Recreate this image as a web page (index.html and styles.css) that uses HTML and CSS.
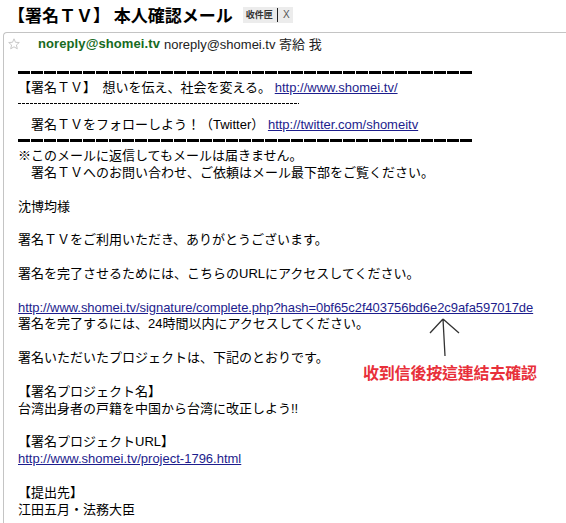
FILE: index.html
```html
<!DOCTYPE html>
<html>
<head>
<meta charset="utf-8">
<link rel="stylesheet" href="styles.css">
</head>
<body>
<div class="page">
  <div class="title-row">
    <h1 class="title">【署名ＴＶ】 本人確認メール</h1>
    <span class="tag"><span class="tag-label">收件匣</span><span class="tag-sep"></span><span class="tag-x">X</span></span>
  </div>
  <div class="panel">
    <div class="sender-row">
      <svg class="star" width="12" height="12" viewBox="0 0 12 12"><path d="M6 0.8 L7.5 4.3 L11.3 4.5 L8.4 7 L9.3 10.8 L6 8.8 L2.7 10.8 L3.6 7 L0.7 4.5 L4.5 4.3 Z" fill="#fff" stroke="#c8c8c8" stroke-width="1"/></svg>
      <span class="from-name">noreply@shomei.tv</span>
      <span class="from-addr">noreply@shomei.tv 寄給 我</span>
    </div>
    <div class="mail">
      <div class="thick"></div>
      <div class="line row-a">【署名ＴＶ】　想いを伝え、社会を変える。 <a href="#">http://www.shomei.tv/</a></div>
      <div class="dash"></div>
      <div class="line row-b">　署名ＴＶをフォローしよう！（Twitter） <a href="#">http://twitter.com/shomeitv</a></div>
      <div class="thick"></div>
      <div class="body">
        <div class="line">※このメールに返信してもメールは届きません。</div>
        <div class="line">　署名ＴＶへのお問い合わせ、ご依頼はメール最下部をご覧ください。</div>
        <div class="line blank"></div>
        <div class="line">沈博均様</div>
        <div class="line blank"></div>
        <div class="line">署名ＴＶをご利用いただき、ありがとうございます。</div>
        <div class="line blank"></div>
        <div class="line">署名を完了させるためには、こちらのURLにアクセスしてください。</div>
        <div class="line blank"></div>
        <div class="line url-long"><a href="#">http://www.shomei.tv/signature/complete.php?hash=0bf65c2f403756bd6e2c9afa597017de</a></div>
        <div class="line">署名を完了するには、24時間以内にアクセスしてください。</div>
        <div class="line blank"></div>
        <div class="line">署名いただいたプロジェクトは、下記のとおりです。</div>
        <div class="line blank"></div>
        <div class="line">【署名プロジェクト名】</div>
        <div class="line">台湾出身者の戸籍を中国から台湾に改正しよう!!</div>
        <div class="line blank"></div>
        <div class="line">【署名プロジェクトURL】</div>
        <div class="line"><a href="#">http://www.shomei.tv/project-1796.html</a></div>
        <div class="line blank"></div>
        <div class="line">【提出先】</div>
        <div class="line">江田五月・法務大臣</div>
      </div>
    </div>
    <svg class="arrow" width="40" height="42" viewBox="0 0 40 42"><path d="M14 1 L16 38 M14 1 L1 15 M14 1 L30 15" fill="none" stroke="#333" stroke-width="1.3"/></svg>
    <div class="note">收到信後按這連結去確認</div>
  </div>
</div>
</body>
</html>
```
FILE: styles.css
```css
html, body {
  margin: 0;
  padding: 0;
  background: #fff;
}
body {
  width: 566px;
  height: 523px;
  overflow: hidden;
  font-family: "Liberation Sans", "Noto Sans CJK JP", sans-serif;
  color: #000;
}
.page {
  display: flex;
  flex-direction: column;
}
.title-row {
  display: flex;
  align-items: center;
  height: 32px;
  padding-left: 8px;
}
.title {
  margin: 0;
  font-size: 17px;
  font-weight: bold;
  font-family: "Noto Sans CJK JP", sans-serif;
  line-height: 20px;
  margin-top: -2px;
}
.tag {
  display: flex;
  align-items: center;
  margin-left: 10px;
  margin-top: -3px;
  background: #ececec;
  height: 16px;
  padding: 0 3px 0 3px;
}
.tag-label {
  font-family: "Noto Sans CJK TC", sans-serif;
  font-size: 9px;
  font-weight: bold;
  color: #333;
  line-height: 16px;
}
.tag-sep {
  width: 1px;
  height: 14px;
  background: #222;
  margin: 0 5px 0 4px;
}
.tag-x {
  font-size: 10px;
  color: #555;
}
.panel {
  position: relative;
  margin-left: 3px;
  border-top: 1px solid #c4c4c4;
  border-left: 1px solid #c4c4c4;
  border-top-left-radius: 4px;
  height: 500px;
}
.sender-row {
  display: flex;
  align-items: center;
  height: 21px;
  font-size: 13px;
}
.star {
  margin-left: 4px;
  margin-right: 18px;
}
.from-name {
  font-weight: bold;
  color: #176a22;
  letter-spacing: 0.1px;
}
.from-addr {
  margin-left: 4px;
  color: #222;
}
.mail {
  padding-left: 14px;
  padding-top: 11px;
  font-size: 13px;
}
.thick {
  width: 455px;
  height: 3px;
  background: repeating-linear-gradient(90deg, #000 0 12px, transparent 12px 13px);
  margin: 6px 0 6px 0;
}
.line {
  line-height: 16.85px;
  height: 16.85px;
  white-space: nowrap;
}
.row-a {
  height: 15px;
  line-height: 15px;
}
.dash {
  width: 281px;
  height: 1px;
  background: repeating-linear-gradient(90deg, #000 0 3px, transparent 3px 4px);
  margin: 8px 0 13px 0;
}
.row-b {
  height: 16px;
  line-height: 15px;
}
.body {
  margin-top: 1px;
}
.url-long {
  letter-spacing: -0.06px;
}
a {
  color: #1d1d8d;
  text-decoration: underline;
}
.arrow {
  position: absolute;
  left: 425px;
  top: 285px;
}
.note {
  position: absolute;
  left: 359px;
  top: 329px;
  font-family: "Noto Sans CJK TC", sans-serif;
  font-size: 16px;
  font-weight: bold;
  color: #e8303a;
  line-height: 20px;
  letter-spacing: -0.2px;
}
```
